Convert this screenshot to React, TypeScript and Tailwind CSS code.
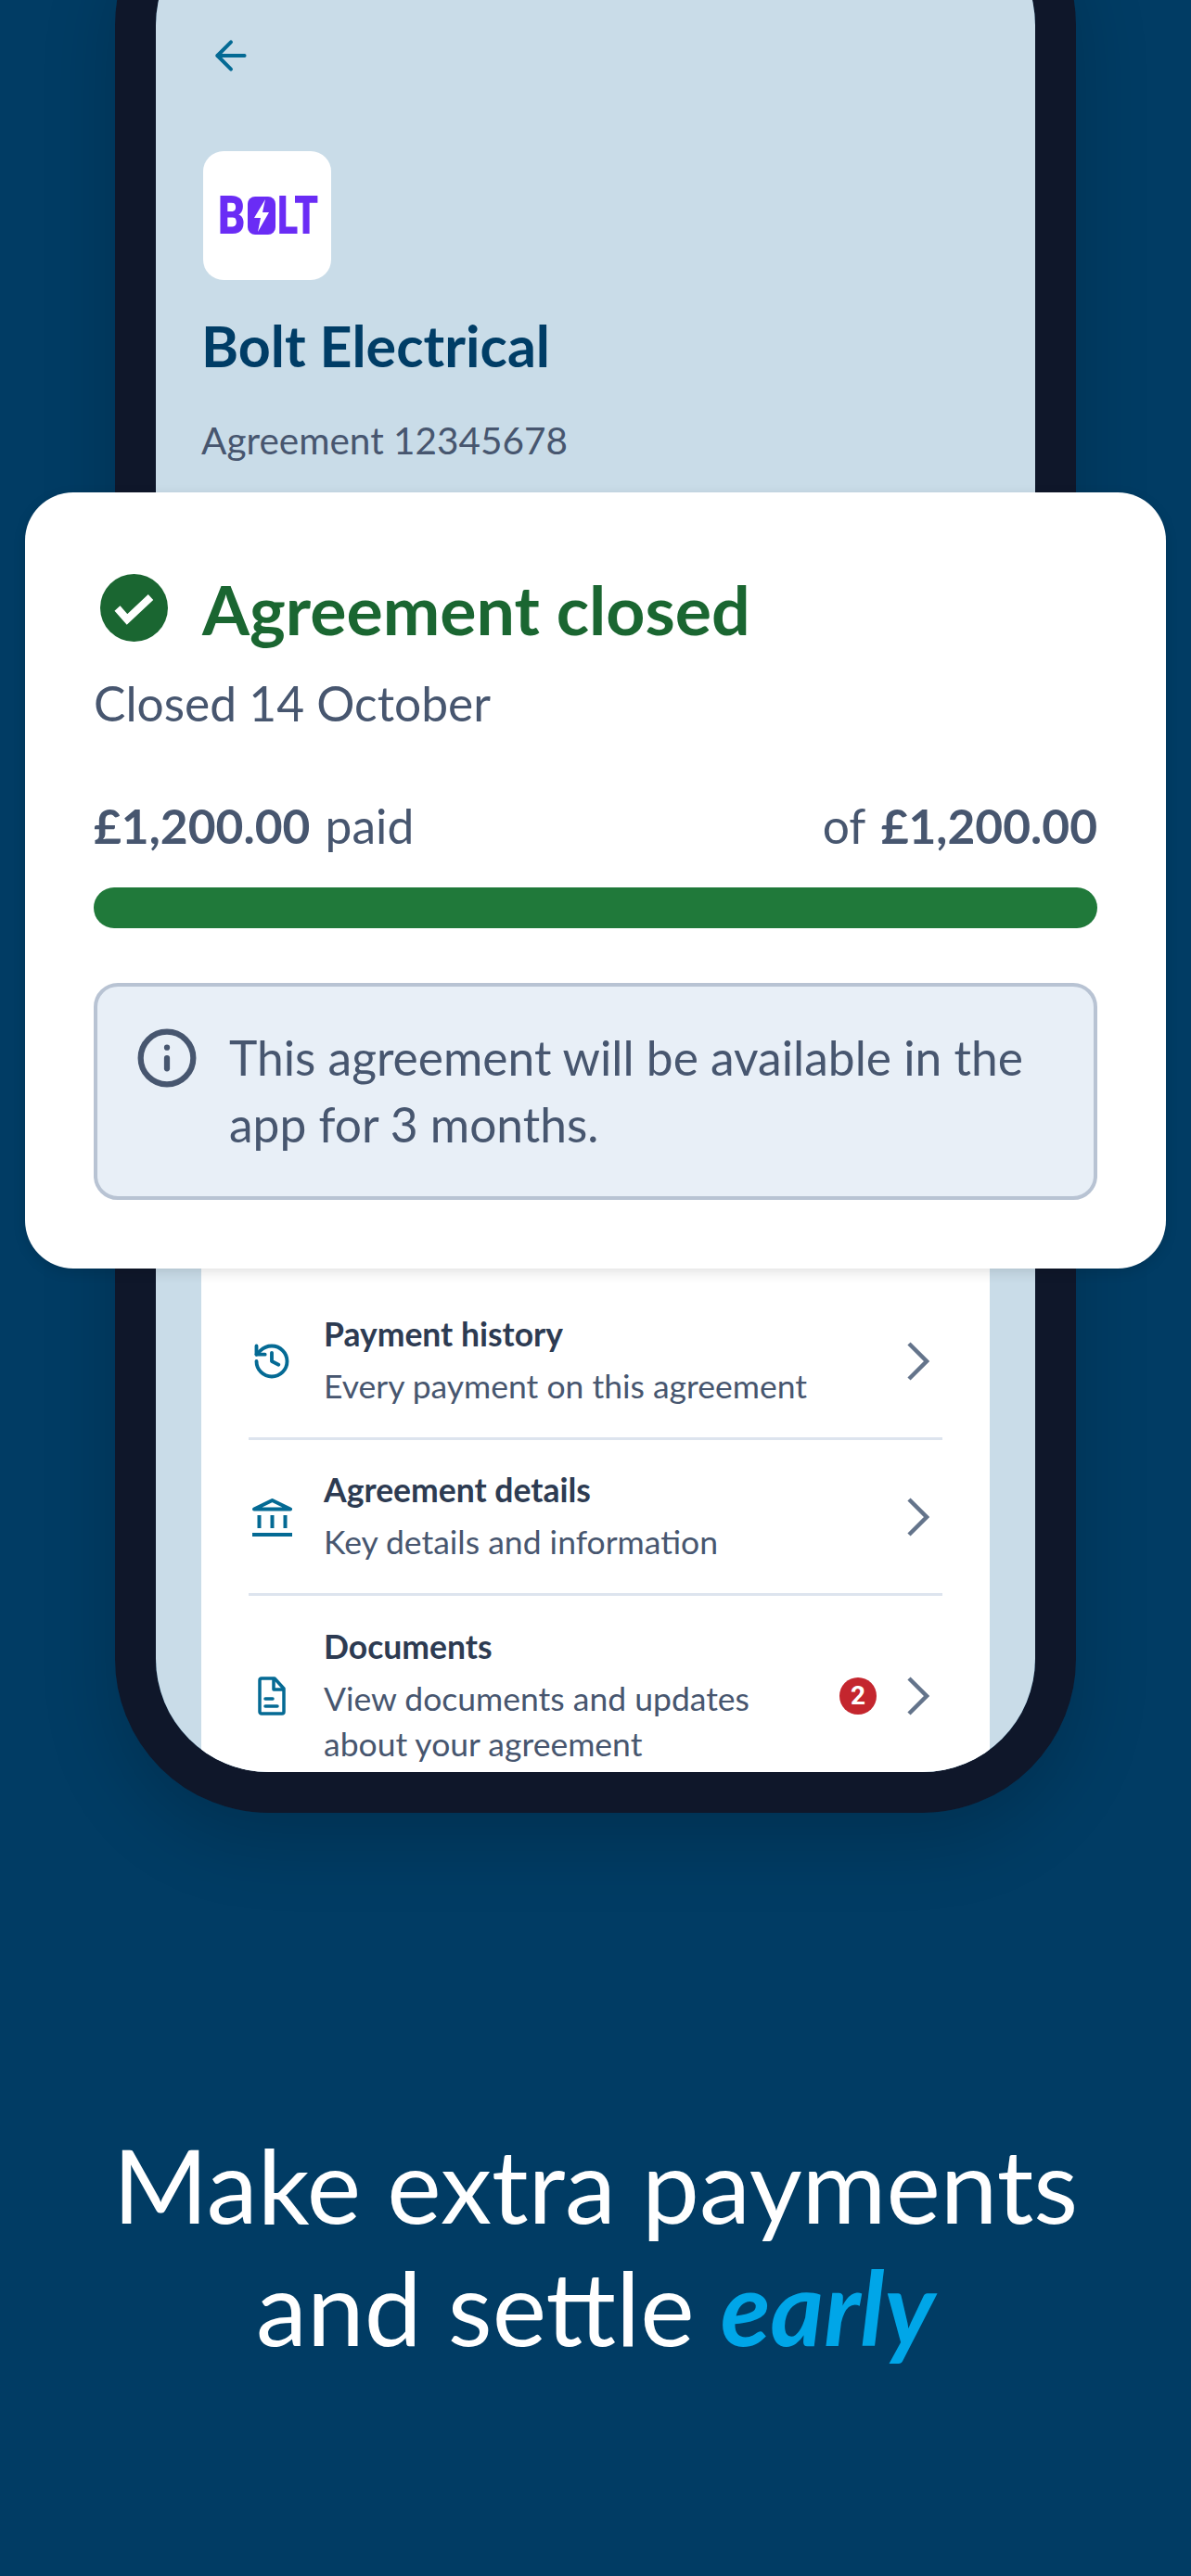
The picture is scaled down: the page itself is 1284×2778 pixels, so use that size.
import { ArrowLeft, History, Info } from 'lucide-react';

const lato = 'font-["Lato","Noto_Sans",sans-serif]';

const BankIcon = () => (
  <svg viewBox="0 0 43 42" className="h-[42px] w-[43px]" fill="none" stroke="#046a94" strokeWidth="4">
    <path d="M2 12.5 21.5 3 41 12.5Z" strokeLinejoin="round" />
    <path d="M0 40h43" />
    <path d="M7.5 19v14M21.5 19v14M35.5 19v14" />
  </svg>
);

const DocIcon = () => (
  <svg viewBox="0 0 30 42" className="h-[42px] w-[30px]" fill="none" stroke="#046a94" strokeWidth="3.5" strokeLinejoin="round">
    <path d="M4 2h14l10 11v25a2 2 0 0 1-2 2H4a2 2 0 0 1-2-2V4a2 2 0 0 1 2-2Z" />
    <path d="M17 2v12h11" />
    <path d="M8 24h8M8 32h13" strokeLinecap="round" />
  </svg>
);

const Chevron = () => (
  <svg viewBox="0 0 24 42" className="h-[42px] w-[24px] shrink-0" fill="none" stroke="#64748b" strokeWidth="4.5">
    <path d="M2 2l19 19L2 40" />
  </svg>
);

const rows = [
  { title: 'Payment history', sub: ['Every payment on this agreement'], icon: <History className="h-[46px] w-[46px] text-[#046a94]" strokeWidth={2.1} /> },
  { title: 'Agreement details', sub: ['Key details and information'], icon: <BankIcon /> },
  { title: 'Documents', sub: ['View documents and updates', 'about your agreement'], icon: <DocIcon />, badge: 2 },
];

const Row = ({ title, sub, icon, badge, last }: { title: string; sub: string[]; icon: React.ReactNode; badge?: number; last: boolean }) => (
  <div className={`flex items-center ${last ? 'h-[216px] shrink-0' : 'h-[168px] border-b-[3px] border-[#dde4ee]'}`}>
    <div className="flex w-[81px] shrink-0 justify-start pl-[3px]">
      <div className="flex w-[44px] justify-center">{icon}</div>
    </div>
    <div className="min-w-0 flex-1 pb-[5px]">
      <div className="mb-[3px] text-[35.5px] leading-[56px] font-bold text-[#2d3b52]">{title}</div>
      {sub.map((line) => (
        <div key={line} className="text-[35.5px] leading-[49px] text-[#47566f]">{line}</div>
      ))}
    </div>
    {badge && (
      <div className='mr-[33px] flex h-[40px] w-[40px] items-center justify-center rounded-full bg-[#c4262e] font-["Roboto",sans-serif] text-[28px] font-bold text-white'>
        {badge}
      </div>
    )}
    <div className="mr-[14px]"><Chevron /></div>
  </div>
);

const BoltLogo = () => (
  <div className="flex h-[139px] w-[138px] items-center justify-center rounded-[22px] bg-white">
    <div className='flex h-[41px] items-center font-["Roboto",sans-serif] text-[57px] leading-[41px] font-black text-[#6a2cf5]'>
      <span className="inline-block w-[30px] origin-left scale-x-[0.8]">B</span>
      <svg viewBox="0 0 30 41" className="ml-[2px] h-[41px] w-[30px]">
        <rect width="30" height="41" rx="8" fill="#6a2cf5" />
        <path d="M19 3 7 23h7l-3 15 12-21h-7Z" fill="#fff" />
      </svg>
      <span className="ml-[2px] inline-block w-[42px] origin-left scale-x-[0.72] whitespace-nowrap">LT</span>
    </div>
  </div>
);

export default function App() {
  return (
    <div className={`relative flex h-[2778px] w-[1284px] flex-col items-center overflow-hidden bg-[#013c64] ${lato}`}>
      {/* phone, top runs off the page */}
      <div className="mt-[-139px] h-[2094px] w-[1036px] shrink-0 rounded-[166px] border-[44px] border-[#0f172a] shadow-[0_30px_80px_rgba(0,0,0,0.18)]">
        <div className="flex h-full flex-col overflow-hidden rounded-[122px] bg-[#c9dce8]">
          <div className="shrink-0 pt-[130px] pl-[49px]">
            <ArrowLeft className="ml-[7px] h-[50px] w-[50px] text-[#046a94]" strokeWidth={1.9} />
            <div className="mt-[78px] ml-[2px]"><BoltLogo /></div>
            <h1 className="mt-[35px] text-[61px] leading-[72px] font-bold text-[#003d66]">Bolt Electrical</h1>
            <p className="mt-[41px] text-[40.5px] leading-[50px] text-[#47566f]">Agreement 12345678</p>
          </div>
          {/* list starts behind the card */}
          <div className="mx-[49px] mt-[785px] shrink-0 bg-white px-[51px] pt-[100px]">
            {rows.map((row, i) => (
              <Row key={row.title} {...row} last={i === rows.length - 1} />
            ))}
          </div>
        </div>
      </div>

      {/* status card over the phone */}
      <div className="absolute top-[531px] left-[27px] h-[837px] w-[1230px] rounded-[52px] bg-white px-[74px] pt-[79px] shadow-[0_4px_14px_rgba(0,0,0,0.12)]">
        <div className="flex items-center">
          <svg viewBox="0 0 73 73" className="ml-[7px] h-[73px] w-[73px]">
            <circle cx="36.5" cy="36.5" r="36.5" fill="#1a6631" />
            <path d="M18.5 37 29 49 54.5 25" fill="none" stroke="#fff" strokeWidth="8" />
          </svg>
          <h2 className="ml-[37px] pt-[3px] text-[73.5px] leading-[88px] font-bold text-[#1a6631]">Agreement closed</h2>
        </div>
        <p className="mt-[25px] text-[51.5px] leading-[64px] text-[#47566f]">Closed 14 October</p>
        <div className="mt-[68px] flex justify-between text-[51.5px] leading-[64px] text-[#47566f]">
          <span><b className="mr-[3px]">£1,200.00</b> paid</span>
          <span>of <b className="ml-[4px]">£1,200.00</b></span>
        </div>
        <div className="mt-[35px] h-[44px] rounded-full bg-[#20793a]" />
        <div className="mt-[59px] flex h-[234px] rounded-[26px] border-[4px] border-[#b8c3d3] bg-[#e8eff7] pt-[40px] pl-[41px]">
          <Info className="mt-[3px] h-[68px] w-[68px] shrink-0 text-[#47566f]" strokeWidth={2.2} />
          <p className="ml-[33px] w-[880px] text-[51.5px] leading-[72px] text-[#47566f]">
            This agreement will be available in the app for 3 months.
          </p>
        </div>
      </div>

      <h2 className="mt-[335px] text-center text-[110.5px] leading-[132px] text-white">
        Make extra payments
        <br />
        and settle <em className="font-bold text-[#00a6e8]">early</em>
      </h2>
    </div>
  );
}
